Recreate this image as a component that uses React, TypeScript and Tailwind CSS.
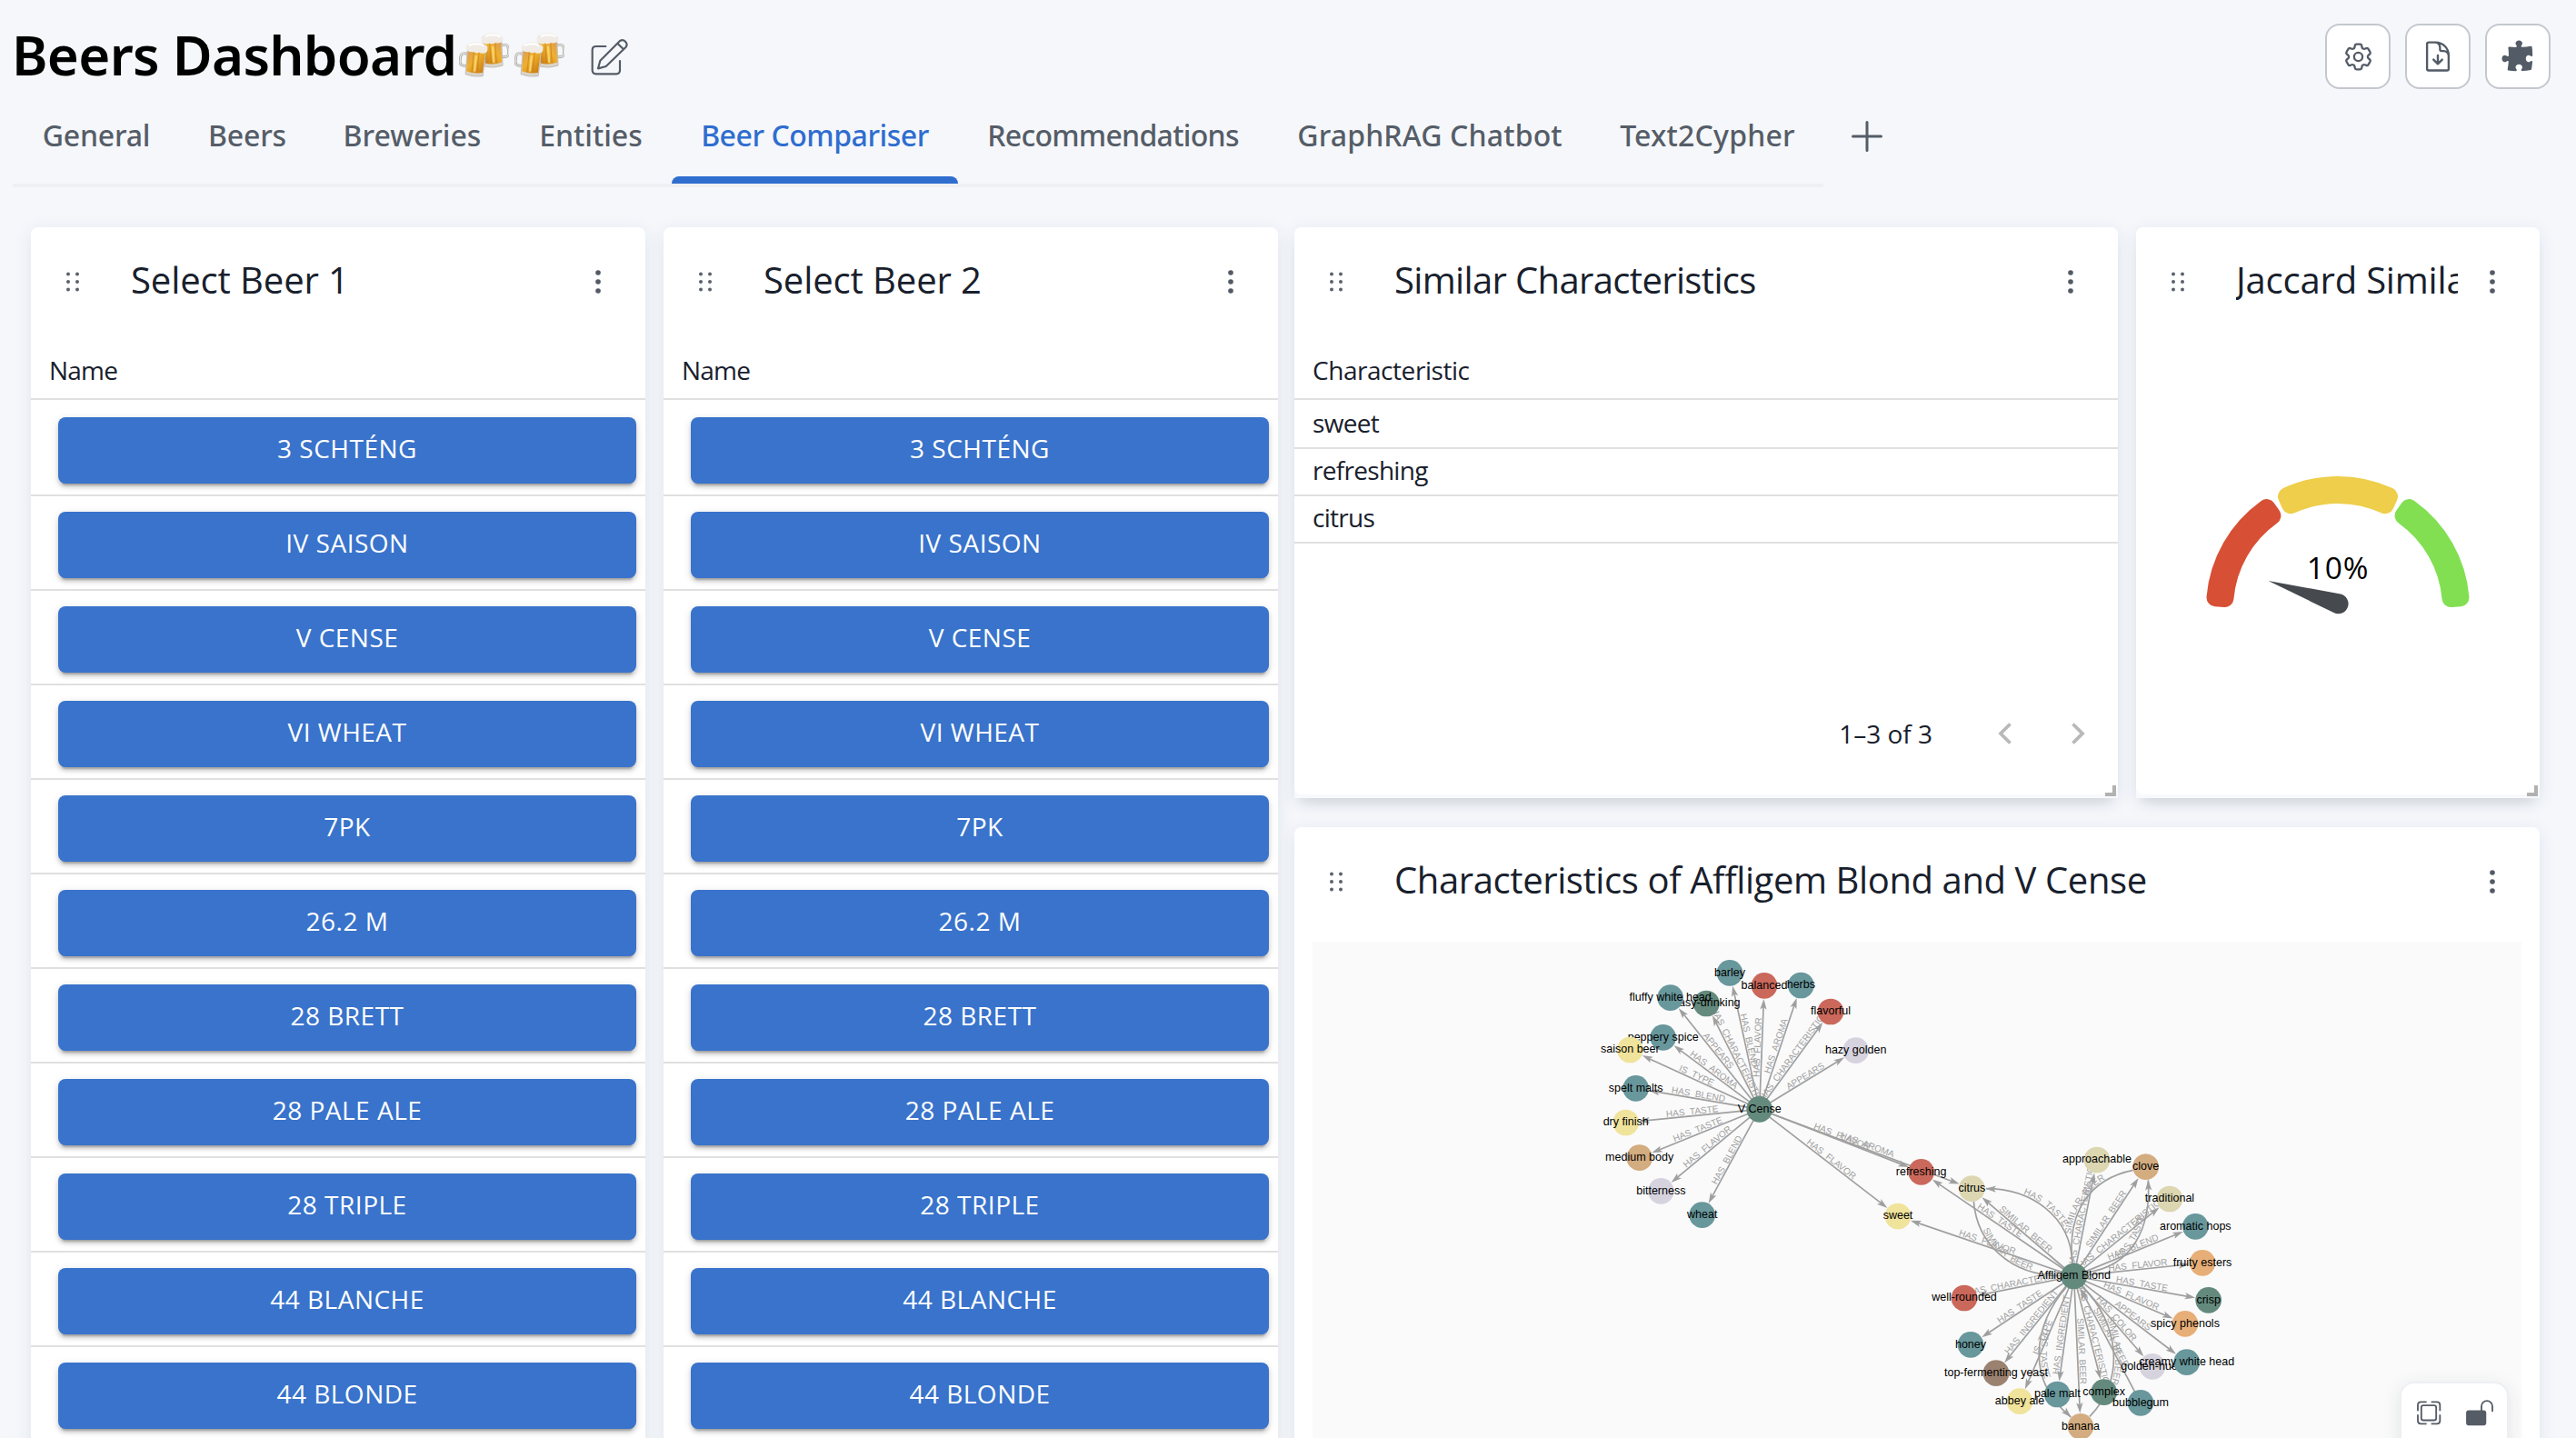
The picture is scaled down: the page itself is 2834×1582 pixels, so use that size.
import type { ReactNode } from "react";
import {
  HiOutlineCog6Tooth,
  HiOutlineDocumentArrowDown,
  HiPuzzlePiece,
} from "react-icons/hi2";

const TABS = [
  { name: "General", cls: "w-[184px] tracking-[-0.2px]" },
  { name: "Beers", cls: "w-[148px] tracking-[-0.2px]" },
  { name: "Breweries", cls: "w-[215px]" },
  { name: "Entities", cls: "w-[178px]" },
  { name: "Beer Compariser", cls: "w-[315px] tracking-[-0.45px]" },
  { name: "Recommendations", cls: "w-[341px] tracking-[-0.7px]" },
  { name: "GraphRAG Chatbot", cls: "w-[356px] tracking-[0.15px]" },
  { name: "Text2Cypher", cls: "w-[255px] tracking-[0.2px]" },
];

const BEERS = [
  "3 SCHTÉNG",
  "IV SAISON",
  "V CENSE",
  "VI WHEAT",
  "7PK",
  "26.2 M",
  "28 BRETT",
  "28 PALE ALE",
  "28 TRIPLE",
  "44 BLANCHE",
  "44 BLONDE",
];

const TEAL = "#68979c";
const RED = "#ca685b";
const GREEN = "#638a7d";
const YELLOW = "#f0e39b";
const TAN = "#d3ac80";
const LAV = "#d6d3df";
const KHAKI = "#dcd6b1";
const ORANGE = "#e7ae78";
const BROWN = "#9b8270";

type Node = { id: string; x: number; y: number; fill: string };

const NODES: Node[] = [
  { id: "barley", x: -411, y: -509, fill: TEAL },
  { id: "balanced", x: -297, y: -467, fill: RED },
  { id: "herbs", x: -176, y: -468, fill: TEAL },
  { id: "flavorful", x: -78, y: -381, fill: RED },
  { id: "hazy golden", x: 5, y: -253, fill: LAV },
  { id: "easy-drinking", x: -488, y: -408, fill: GREEN },
  { id: "fluffy white head", x: -607, y: -427, fill: TEAL },
  { id: "peppery spice", x: -631, y: -296, fill: TEAL },
  { id: "saison beer", x: -740, y: -255, fill: YELLOW },
  { id: "spelt malts", x: -721, y: -128, fill: TEAL },
  { id: "dry finish", x: -754, y: -15, fill: YELLOW },
  { id: "medium body", x: -709, y: 101, fill: TAN },
  { id: "bitterness", x: -638, y: 211, fill: LAV },
  { id: "wheat", x: -502, y: 290, fill: TEAL },
  { id: "V Cense", x: -313, y: -59, fill: GREEN },
  { id: "refreshing", x: 221, y: 148, fill: RED },
  { id: "citrus", x: 388, y: 203, fill: KHAKI },
  { id: "sweet", x: 144, y: 294, fill: YELLOW },
  { id: "approachable", x: 801, y: 108, fill: KHAKI },
  { id: "clove", x: 962, y: 131, fill: TAN },
  { id: "traditional", x: 1041, y: 237, fill: KHAKI },
  { id: "aromatic hops", x: 1126, y: 328, fill: TEAL },
  { id: "fruity esters", x: 1149, y: 448, fill: ORANGE },
  { id: "crisp", x: 1169, y: 571, fill: GREEN },
  { id: "spicy phenols", x: 1092, y: 649, fill: ORANGE },
  { id: "golden-hued", x: 984, y: 790, fill: LAV },
  { id: "creamy white head", x: 1097, y: 776, fill: TEAL },
  { id: "complex", x: 824, y: 875, fill: GREEN },
  { id: "bubblegum", x: 945, y: 910, fill: TEAL },
  { id: "abbey ale", x: 546, y: 905, fill: YELLOW },
  { id: "pale malt", x: 670, y: 882, fill: TEAL },
  { id: "banana", x: 747, y: 988, fill: TAN },
  { id: "top-fermenting yeast", x: 468, y: 812, fill: BROWN },
  { id: "honey", x: 384, y: 718, fill: TEAL },
  { id: "well-rounded", x: 363, y: 564, fill: RED },
  { id: "Affligem Blond", x: 725, y: 492, fill: GREEN },
];

const V = "V Cense";
const A = "Affligem Blond";
const EDGES: [string, string, string][] = [
  [V, "barley", "HAS_BLEND"],
  [V, "balanced", "HAS_FLAVOR"],
  [V, "herbs", "HAS_AROMA"],
  [V, "flavorful", "HAS_CHARACTERISTIC"],
  [V, "hazy golden", "APPEARS"],
  [V, "easy-drinking", "HAS_CHARACTERISTIC"],
  [V, "fluffy white head", "APPEARS"],
  [V, "peppery spice", "HAS_AROMA"],
  [V, "saison beer", "IS_TYPE"],
  [V, "spelt malts", "HAS_BLEND"],
  [V, "dry finish", "HAS_TASTE"],
  [V, "medium body", "HAS_TASTE"],
  [V, "bitterness", "HAS_FLAVOR"],
  [V, "wheat", "HAS_BLEND"],
  [V, "refreshing", "HAS_FLAVOR"],
  [V, "citrus", "HAS_AROMA"],
  [V, "sweet", "HAS_FLAVOR"],
  [A, "refreshing", "HAS_TASTE"],
  [A, "citrus", "SIMILAR_BEER"],
  [A, "sweet", "HAS_FLAVOR"],
  [A, "approachable", "HAS_CHARACTERISTIC"],
  [A, "clove", "SIMILAR_BEER"],
  [A, "traditional", "HAS_CHARACTERISTIC"],
  [A, "aromatic hops", "HAS_BLEND"],
  [A, "fruity esters", "HAS_FLAVOR"],
  [A, "crisp", "HAS_TASTE"],
  [A, "spicy phenols", "HAS_FLAVOR"],
  [A, "creamy white head", "APPEARS"],
  [A, "golden-hued", "HAS_COLOR"],
  ["bubblegum", A, "SIMILAR_BEER"],
  [A, "complex", "HAS_CHARACTERISTIC"],
  [A, "banana", "SIMILAR_BEER"],
  [A, "pale malt", "HAS_INGREDIENT"],
  [A, "abbey ale", "IS_TYPE"],
  [A, "top-fermenting yeast", "HAS_INGREDIENT"],
  [A, "honey", "HAS_TASTE"],
  [A, "well-rounded", "HAS_CHARACTERISTIC"],
];

const CURVES = [
  { d: "M435,203 C580,203 715,290 720,450", label: "HAS_TASTE", tip: [433, 203, 182] },
  { d: "M394,245 C405,380 510,490 683,491", label: "SIMILAR_BEER", tip: null },
  { d: "M720,450 C700,270 785,170 920,142", label: "SIMILAR_BEER", tip: null },
  { d: "M765,480 C920,460 980,330 970,175", label: "HAS_TASTE", tip: [970, 174, -92] },
  { d: "M700,528 C595,650 560,830 715,957", label: "HAS_TASTE", tip: [716, 958, 45] },
  { d: "M755,530 C870,640 900,830 777,955", label: "SIMILAR_BEER", tip: [748, 535, -112] },
];

function Arrow({ x, y, deg }: { x: number; y: number; deg: number }) {
  return (
    <path
      d="M0,0 L-35,-11 L-27,0 L-35,11 Z"
      fill="#9f9f9f"
      transform={`translate(${x} ${y}) rotate(${deg})`}
    />
  );
}

function Graph() {
  const at = (id: string) => NODES.find((n) => n.id === id)!;
  return (
    <svg
      viewBox="-1788 -612 3990 1638"
      className="block h-[546px] w-[1330px]"
      fontFamily="'Liberation Sans', Arial, sans-serif"
    >
      {EDGES.map(([from, to, label]) => {
        const a = at(from);
        const b = at(to);
        const rad = Math.atan2(b.y - a.y, b.x - a.x);
        const deg = (rad * 180) / Math.PI;
        const ex = b.x - Math.cos(rad) * 44;
        const ey = b.y - Math.sin(rad) * 44;
        const flip = deg > 90 || deg <= -90 ? deg + 180 : deg;
        return (
          <g key={from + to}>
            <line
              x1={a.x}
              y1={a.y}
              x2={ex - Math.cos(rad) * 20}
              y2={ey - Math.sin(rad) * 20}
              stroke="#9f9f9f"
              strokeWidth={5}
            />
            <Arrow x={ex} y={ey} deg={deg} />
            <text
              transform={`translate(${(a.x + b.x) / 2} ${(a.y + b.y) / 2}) rotate(${flip})`}
              y={-5}
              textAnchor="middle"
              fontSize={30}
              fill="#a0a0a0"
            >
              {label}
            </text>
          </g>
        );
      })}
      {CURVES.map((c, i) => (
        <g key={c.d}>
          <path id={`curve-${i}`} d={c.d} fill="none" stroke="#9f9f9f" strokeWidth={5} />
          {c.tip && <Arrow x={c.tip[0]} y={c.tip[1]} deg={c.tip[2]} />}
          <text fontSize={30} fill="#a0a0a0" textAnchor="middle" dy={-5}>
            <textPath href={`#curve-${i}`} startOffset="50%">
              {c.label}
            </textPath>
          </text>
        </g>
      ))}
      {NODES.map((n) => (
        <g key={n.id}>
          <circle cx={n.x} cy={n.y} r={43} fill={n.fill} />
          <text x={n.x} y={n.y + 10} textAnchor="middle" fontSize={37.6} fill="#000">
            {n.id}
          </text>
        </g>
      ))}
    </svg>
  );
}

function arcPath(from: number, to: number) {
  const p = (r: number, deg: number) => {
    const t = (deg * Math.PI) / 180;
    return `${(145 + r * Math.cos(t)).toFixed(2)},${(145 - r * Math.sin(t)).toFixed(2)}`;
  };
  return `M${p(135, from)} A135,135 0 0 1 ${p(135, to)} L${p(125, to)} A125,125 0 0 0 ${p(125, from)} Z`;
}

function Gauge() {
  return (
    <svg viewBox="0 0 290 160" className="h-[160px] w-[290px]">
      <g strokeWidth={20} strokeLinejoin="round">
        <path d={arcPath(175, 125.5)} fill="#d75036" stroke="#d75036" />
        <path d={arcPath(114.5, 65.5)} fill="#eece4a" stroke="#eece4a" />
        <path d={arcPath(54.5, 5)} fill="#82df52" stroke="#82df52" />
      </g>
      <path d="M68.5,115 L148,129.5 A11,11 0 1 1 140.5,150 Z" fill="#464a4f" />
      <text
        x={145}
        y={113}
        textAnchor="middle"
        fontSize={33.5}
        letterSpacing={0.8}
        fontFamily="'Open Sans', sans-serif"
        fill="#000"
      >
        10%
      </text>
    </svg>
  );
}

function Mug() {
  return (
    <g>
      <path
        d="M4,38 H-8 Q-20,38 -20,52 V64 Q-20,78 -8,78 H4"
        fill="none"
        stroke="#9d9a94"
        strokeWidth={8}
      />
      <path
        d="M4,38 H-8 Q-20,38 -20,52 V64 Q-20,78 -8,78 H4"
        fill="none"
        stroke="#e8e6e2"
        strokeWidth={4}
      />
      <path d="M0,18 H62 L60,106 Q31,114 2,106 Z" fill="#d9d3c9" stroke="#a8a29a" strokeWidth={1.5} />
      <path d="M2,20 H60 L58,95 Q31,102 4,95 Z" fill="url(#beer)" />
      <path d="M22,32 V96 M40,32 V96" stroke="#b86f13" strokeOpacity={0.5} strokeWidth={3} />
      <path d="M31,40 V94" stroke="#fbdc7c" strokeOpacity={0.8} strokeWidth={7} />
      <path
        d="M-3,26 Q-9,12 3,7 Q10,-5 26,-2 Q42,-8 52,1 Q68,2 66,16 Q68,28 57,30 Q48,34 40,29 Q30,36 22,29 Q8,34 -3,26 Z"
        fill="#f0ebe4"
      />
      <path d="M6,10 Q16,0 28,4 Q40,-2 50,6" fill="none" stroke="#fff" strokeWidth={6} strokeLinecap="round" />
    </g>
  );
}

function BeersEmoji() {
  return (
    <svg viewBox="44 42 165 155" className="h-[52px] w-[55px]" role="img" aria-label="🍻">
      <defs>
        <linearGradient id="beer" x1="0" x2="1" y1="0" y2="1">
          <stop offset="0" stopColor="#d99a5a" />
          <stop offset="0.45" stopColor="#efb02f" />
          <stop offset="1" stopColor="#c8780f" />
        </linearGradient>
      </defs>
      <g transform="translate(183 50) rotate(-4) scale(-1 1)">
        <Mug />
      </g>
      <g transform="translate(74 79) rotate(6)">
        <Mug />
      </g>
    </svg>
  );
}

function EditIcon() {
  return (
    <svg
      viewBox="483 60 126 126"
      className="h-[42px] w-[42px]"
      fill="none"
      stroke="#535b66"
      strokeWidth={6.5}
      strokeLinejoin="round"
      strokeLinecap="round"
    >
      <path d="M532,90 H500 Q488,90 488,102 V169 Q488,181 500,181 H567 Q579,181 579,169 V138" />
      <path d="M507,163 L514,137 L579,72 A14.5,14.5 0 0 1 599,92 L533,156 Z M571,80 L591,100" />
    </svg>
  );
}

function DragDots() {
  return (
    <svg viewBox="0 0 16 24" className="h-6 w-4" fill="#5a616c">
      {[3, 13].map((x) =>
        [3.5, 12, 20.5].map((y) => <circle key={`${x}-${y}`} cx={x} cy={y} r={2} />),
      )}
    </svg>
  );
}

function MenuDots() {
  return (
    <svg viewBox="0 0 8 28" className="h-7 w-2 shrink-0" fill="#535a65">
      <circle cx={4} cy={4} r={2.8} />
      <circle cx={4} cy={14} r={2.8} />
      <circle cx={4} cy={24} r={2.8} />
    </svg>
  );
}

function CardHeader({ title, cls }: { title: string; cls: string }) {
  return (
    <div className="flex h-[120px] items-center pl-[38px] pr-[48px]">
      <DragDots />
      <div
        className={`ml-[56px] mt-[-4px] min-w-0 flex-1 overflow-hidden whitespace-nowrap text-[40px] leading-[56px] text-[#18202c] ${cls}`}
      >
        {title}
      </div>
      <div className="w-[34px] shrink-0" />
      <MenuDots />
    </div>
  );
}

function Handle() {
  return (
    <div className="absolute bottom-[2px] right-[2px] h-3 w-3 border-b-4 border-r-4 border-[#b1b1b1]" />
  );
}

function ColumnHead({ children, cls }: { children: ReactNode; cls: string }) {
  return (
    <div
      className={`flex h-[70px] items-center border-b-2 border-[#e0e0e0] pl-[20px] text-[28px] text-[#18202c] ${cls}`}
    >
      <span className="mt-[5px]">{children}</span>
    </div>
  );
}

const CARD = "bg-white rounded-t-lg shadow-[0_4px_20px_rgba(20,60,90,0.09)]";

function BeerCard({ title }: { title: string }) {
  return (
    <section className={`h-[1400px] w-[676px] shrink-0 ${CARD}`}>
      <CardHeader title={title} cls="tracking-[-0.1px]" />
      <ColumnHead cls="tracking-[-0.8px]">Name</ColumnHead>
      {BEERS.map((b, i) => (
        <div
          key={b}
          className={`border-b-2 border-[#e0e0e0] pb-3 pl-[30px] pr-[10px] ${i === 0 ? "pt-[19px]" : "pt-[17px]"}`}
        >
          <button className="flex h-[73px] w-full items-center justify-center rounded-lg bg-[#3973cb] pb-[5px] text-[28px] tracking-[0.5px] text-white shadow-[0_6px_2px_-4px_rgba(0,0,0,0.2),0_4px_4px_rgba(0,0,0,0.14),0_2px_10px_rgba(0,0,0,0.12)]">
            {b}
          </button>
        </div>
      ))}
    </section>
  );
}

function SmallCard({ width, children }: { width: string; children: ReactNode }) {
  return (
    <section
      className={`relative h-[628px] shrink-0 rounded-t-lg bg-[#f8f9fc] shadow-[0_4px_20px_rgba(20,60,90,0.09),0_12px_14px_-8px_rgba(0,0,0,0.10)] ${width}`}
    >
      <div className="flex h-[624px] flex-col rounded-lg bg-white">{children}</div>
      <Handle />
    </section>
  );
}

function Chevron({ right }: { right?: boolean }) {
  return (
    <svg viewBox="0 0 16 24" className="h-6 w-4" fill="none" stroke="#b9b9b9" strokeWidth={3.8}>
      <path d={right ? "M2.5,1.5 L13,12 L2.5,22.5" : "M13.5,1.5 L3,12 L13.5,22.5"} />
    </svg>
  );
}

function ToolButton({ children }: { children: ReactNode }) {
  return (
    <button className="flex h-[72px] w-[72px] items-center justify-center rounded-2xl border-2 border-[#c4c8ce] bg-white text-[#535b66]">
      {children}
    </button>
  );
}

export default function App() {
  return (
    <div className="h-[1582px] w-[2834px] overflow-hidden bg-[#f5f7fb] font-['Open_Sans',sans-serif]">
      <header className="flex h-[124px] items-start justify-between pl-[13px] pr-[28px] font-['Noto_Sans',sans-serif]">
        <div className="flex h-[120px] items-center">
          <h1 className="w-[492px] whitespace-nowrap text-[60px] font-semibold leading-[80px] tracking-[-0.7px] text-black">
            Beers Dashboard
          </h1>
          <span className="flex gap-[6px]">
            <BeersEmoji />
            <BeersEmoji />
          </span>
          <span className="ml-[29px] mt-[4px]">
            <EditIcon />
          </span>
        </div>
        <div className="flex gap-4 pt-[26px]">
          <ToolButton>
            <HiOutlineCog6Tooth size={37} />
          </ToolButton>
          <ToolButton>
            <HiOutlineDocumentArrowDown size={38} />
          </ToolButton>
          <ToolButton>
            <HiPuzzlePiece size={40} />
          </ToolButton>
        </div>
      </header>

      <nav className="flex h-[82px] pl-[14px] font-['Noto_Sans',sans-serif]">
        <div className="flex border-b-4 border-[#eff0f4]">
          {TABS.map((t) => (
            <div
              key={t.name}
              className={`flex flex-col items-center whitespace-nowrap text-[32px] font-medium ${t.cls} ${t.name === "Beer Compariser" ? "text-[#2f6dcf]" : "text-[#555d67]"}`}
            >
              <div className="flex h-[70px] items-start leading-[50px]">{t.name}</div>
              {t.name === "Beer Compariser" && (
                <div className="h-2 w-full rounded-t-lg bg-[#2f6dcf]" />
              )}
            </div>
          ))}
        </div>
        <svg
          viewBox="0 0 34 34"
          className="ml-[31px] mt-[9px] h-[34px] w-[34px]"
          stroke="#555d67"
          strokeWidth={3}
          strokeLinecap="round"
        >
          <path d="M17,1.5 V32.5 M1.5,17 H32.5" />
        </svg>
      </nav>

      <main className="flex pl-[34px] pt-[44px]">
        <BeerCard title="Select Beer 1" />
        <div className="w-5 shrink-0" />
        <BeerCard title="Select Beer 2" />
        <div className="w-[18px] shrink-0" />
        <div className="flex w-[1370px] shrink-0 flex-col gap-8">
          <div className="flex gap-5">
            <SmallCard width="w-[906px]">
              <CardHeader title="Similar Characteristics" cls="tracking-[-0.65px]" />
              <ColumnHead cls="tracking-[-0.45px]">Characteristic</ColumnHead>
              {["sweet", "refreshing", "citrus"].map((c, i) => (
                <div
                  key={c}
                  className={`flex items-end border-b-2 border-[#e0e0e0] pb-[6px] pl-[20px] text-[28px] leading-[42px] tracking-[-0.7px] text-[#18202c] ${i === 0 ? "h-[54px]" : "h-[52px]"}`}
                >
                  {c}
                </div>
              ))}
              <div className="mt-auto flex h-[134px] items-center justify-end pr-[36px] text-[28px] text-[#18202c]">
                <span className="mr-[72px]">1–3 of 3</span>
                <Chevron />
                <span className="w-[64px]" />
                <Chevron right />
              </div>
            </SmallCard>
            <SmallCard width="w-[444px]">
              <CardHeader title="Jaccard Similarity" cls="tracking-[-0.2px]" />
              <div className="flex justify-center pt-[154px]">
                <Gauge />
              </div>
            </SmallCard>
          </div>
          <section className={`h-[760px] ${CARD}`}>
            <CardHeader
              title="Characteristics of Affligem Blond and V Cense"
              cls="tracking-[-0.4px]"
            />
            <div className="relative mx-5 mt-[6px] h-[600px] bg-[#fafafa]">
              <Graph />
              <div className="absolute right-[14px] top-[484px] flex h-[80px] w-[120px] items-start rounded-2xl border-2 border-[#eeeff4] bg-white pl-[17px] pt-[18px] shadow-[0_4px_20px_rgba(20,50,50,0.10)]">
                <svg
                  viewBox="237 359 254 86"
                  className="h-[28.7px] w-[84.7px]"
                  fill="none"
                  stroke="#555c66"
                  strokeWidth={5.5}
                >
                  <path d="M240,396 V376 Q240,366 250,366 H269 M284,366 H303 Q313,366 313,376 V396 M313,408 V428 Q313,438 303,438 H284 M269,438 H250 Q240,438 240,428 V408" />
                  <rect x={251.5} y={377.5} width={49} height={49} rx={7} />
                  <rect x={402} y={396} width={61} height={45} rx={6} fill="#555c66" />
                  <path d="M450,396 V380 A18,17.5 0 0 1 486,380 V398" />
                </svg>
              </div>
            </div>
          </section>
        </div>
      </main>
    </div>
  );
}
